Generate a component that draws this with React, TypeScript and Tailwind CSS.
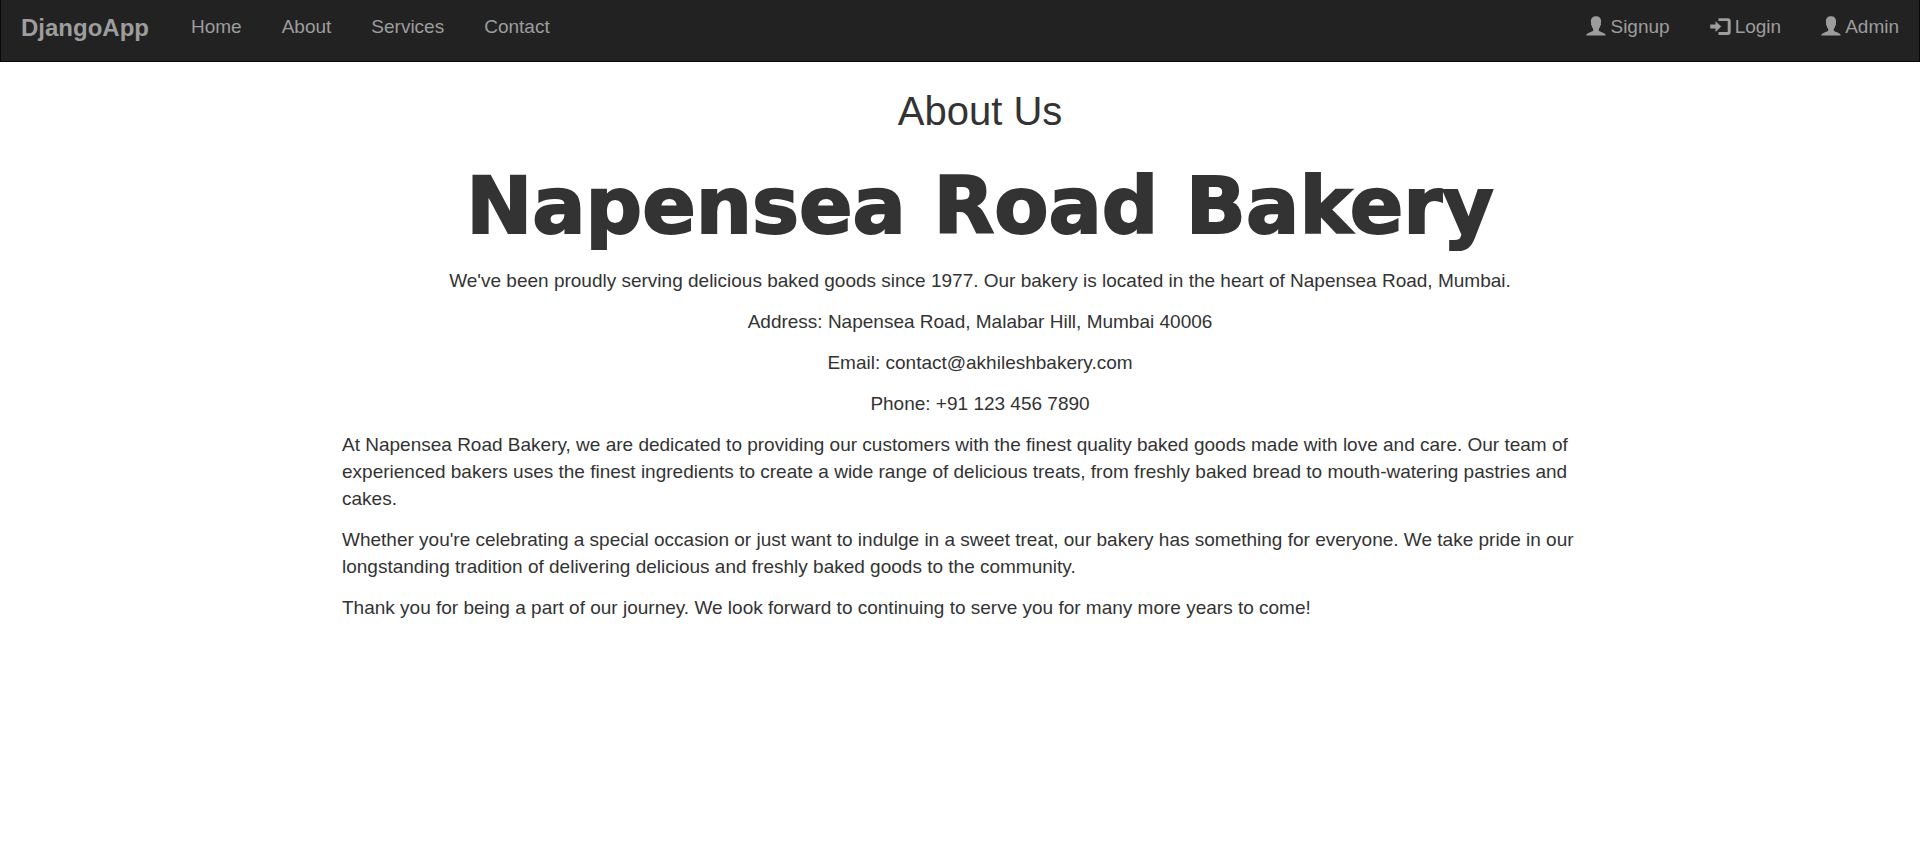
import type { ReactNode } from "react";

const navLink =
  "flex items-center gap-1 px-5 pt-[13px] pb-[21px] leading-[27px] text-[#9d9d9d] hover:text-white";

function UserIcon() {
  return (
    <svg viewBox="0 0 20 20" className="-mt-0.5 size-5" fill="currentColor" aria-hidden="true">
      <path d="M10 .3C6.900.3 4.900 2.300 4.900 5.200c0 1 .1 1.700.3 2.300-.4.500-.2 1.700.4 2.100.3 1.400.8 2.500 1.600 3.300v1.600C6.500 15.400 4.500 16.100 2.600 16.900 1 17.600.4 18.200.3 19.500h19.400c-.1-1.300-.7-1.900-2.300-2.600-1.900-.8-3.900-1.500-4.600-2.400v-1.600c.8-.8 1.300-1.900 1.600-3.300.6-.4.8-1.600.4-2.100.2-.6.3-1.300.3-2.300C15.100 2.300 13.100.3 10 .3z" />
    </svg>
  );
}

function LoginIcon() {
  return (
    <svg viewBox="0 0 21 20" className="h-5 w-[21px]" fill="currentColor" aria-hidden="true">
      <path d="M8.500 1.200h9.300a2.900 2.900 0 0 1 2.900 2.900v11a2.900 2.900 0 0 1-2.900 2.900H8.500v-2.900h9.200V4.100H8.500z" />
      <path d="M5.500 4.300 11.300 9.600 5.500 14.900v-3.300H.2V7.600H5.500z" />
    </svg>
  );
}

function NavItem({ icon, children }: { icon?: ReactNode; children: ReactNode }) {
  return (
    <li>
      <a href="#" className={navLink}>
        {icon}
        {children}
      </a>
    </li>
  );
}

export default function App() {
  return (
    <div className="min-h-screen bg-white font-['Liberation_Sans',Arial,sans-serif] text-[19px] leading-[27px] text-[#333]">
      <nav className="flex justify-between border-x border-b border-[#080808] bg-[#222]">
        <div className="flex gap-0.5">
          <a href="#" className="px-5 pt-3.5 pb-5 text-2xl leading-[27px] font-bold text-[#9d9d9d]">
            DjangoApp
          </a>
          <ul className="flex">
            <NavItem>Home</NavItem>
            <NavItem>About</NavItem>
            <NavItem>Services</NavItem>
            <NavItem>Contact</NavItem>
          </ul>
        </div>
        <ul className="flex">
          <NavItem icon={<UserIcon />}>Signup</NavItem>
          <NavItem icon={<LoginIcon />}>Login</NavItem>
          <NavItem icon={<UserIcon />}>Admin</NavItem>
        </ul>
      </nav>
      <div className="pt-6 pl-10">
        <main className="mx-auto max-w-[1276px]">
          <h2 className="text-center text-[40px] leading-[50px]">About Us</h2>
          <h1 className="mt-[22px] text-center font-['Arial_Black','DejaVu_Sans',sans-serif] text-[79px] leading-[96px] font-black [-webkit-text-stroke:2px_#333]">
            Napensea Road Bakery
          </h1>
          <div className="mt-[13px] space-y-3.5">
            <p className="text-center">
              We've been proudly serving delicious baked goods since 1977. Our bakery is located in the heart of Napensea Road, Mumbai.
            </p>
            <p className="text-center">Address: Napensea Road, Malabar Hill, Mumbai 40006</p>
            <p className="text-center">Email: contact@akhileshbakery.com</p>
            <p className="text-center">Phone: +91 123 456 7890</p>
            <p>
              At Napensea Road Bakery, we are dedicated to providing our customers with the finest quality baked goods made with love and care. Our team of experienced bakers uses the finest ingredients to create a wide range of delicious treats, from freshly baked bread to mouth-watering pastries and cakes.
            </p>
            <p>
              Whether you're celebrating a special occasion or just want to indulge in a sweet treat, our bakery has something for everyone. We take pride in our longstanding tradition of delivering delicious and freshly baked goods to the community.
            </p>
            <p>
              Thank you for being a part of our journey. We look forward to continuing to serve you for many more years to come!
            </p>
          </div>
        </main>
      </div>
    </div>
  );
}
